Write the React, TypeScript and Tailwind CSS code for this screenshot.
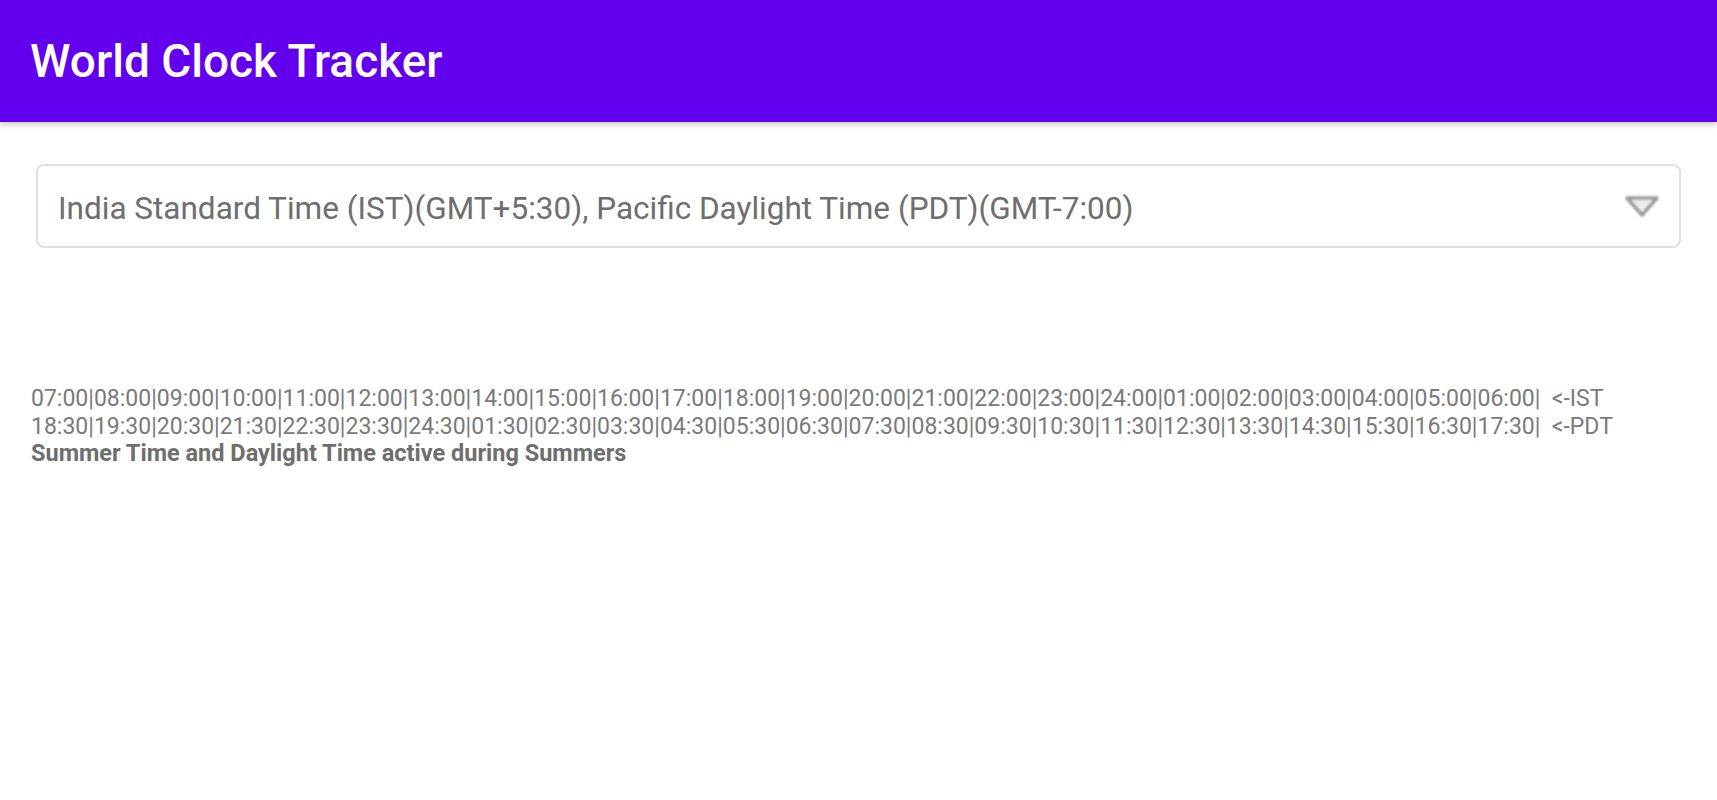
import React from 'react';

const istHours = [
  '07:00', '08:00', '09:00', '10:00', '11:00', '12:00', '13:00', '14:00', '15:00', '16:00', '17:00', '18:00',
  '19:00', '20:00', '21:00', '22:00', '23:00', '24:00', '01:00', '02:00', '03:00', '04:00', '05:00', '06:00',
];

const pdtHours = [
  '18:30', '19:30', '20:30', '21:30', '22:30', '23:30', '24:30', '01:30', '02:30', '03:30', '04:30', '05:30',
  '06:30', '07:30', '08:30', '09:30', '10:30', '11:30', '12:30', '13:30', '14:30', '15:30', '16:30', '17:30',
];

function DropArrow() {
  return (
    <svg width="36" height="24" viewBox="0 0 36 24" className="shrink-0">
      <defs>
        <filter id="soft" x="-20%" y="-20%" width="140%" height="140%">
          <feGaussianBlur stdDeviation="0.9" />
        </filter>
      </defs>
      <polygon
        points="3,4 33,4 18,21"
        fill="#ececec"
        stroke="#9a9a9a"
        strokeWidth="3.5"
        strokeLinejoin="round"
        filter="url(#soft)"
      />
    </svg>
  );
}

export default function App() {
  return (
    <div className="min-h-screen bg-white font-['Roboto',sans-serif]">
      {/* Top app bar */}
      <header className="h-[122px] bg-[#6200ee] flex items-center px-[30px] shadow-[0_2px_6px_rgba(0,0,0,0.25)]">
        <h1 className="text-[46px] font-medium text-white leading-none">World Clock Tracker</h1>
      </header>

      <main className="px-[36px] pt-[42px]">
        <div className="h-[84px] border-2 border-[#e0e0e0] rounded-[8px] flex items-center justify-between pl-[20px] pr-[19px]">
          <span className="text-[31.5px] text-[#6e6e6e] pt-[5px]">
            India Standard Time (IST)(GMT+5:30), Pacific Daylight Time (PDT)(GMT-7:00)
          </span>
          <DropArrow />
        </div>
      </main>

      <section className="px-[31px] pt-[137px] text-[23px] leading-[27.5px] text-[#7a7a7a] whitespace-pre">
        <p>
          {istHours.map((h) => `${h}|`).join('')}
          {'  <-IST'}
        </p>
        <p>
          {pdtHours.map((h) => `${h}|`).join('')}
          {'  <-PDT'}
        </p>
        <p className="font-bold text-[23.5px] text-[#6e6e6e]">Summer Time and Daylight Time active during Summers</p>
      </section>
    </div>
  );
}
